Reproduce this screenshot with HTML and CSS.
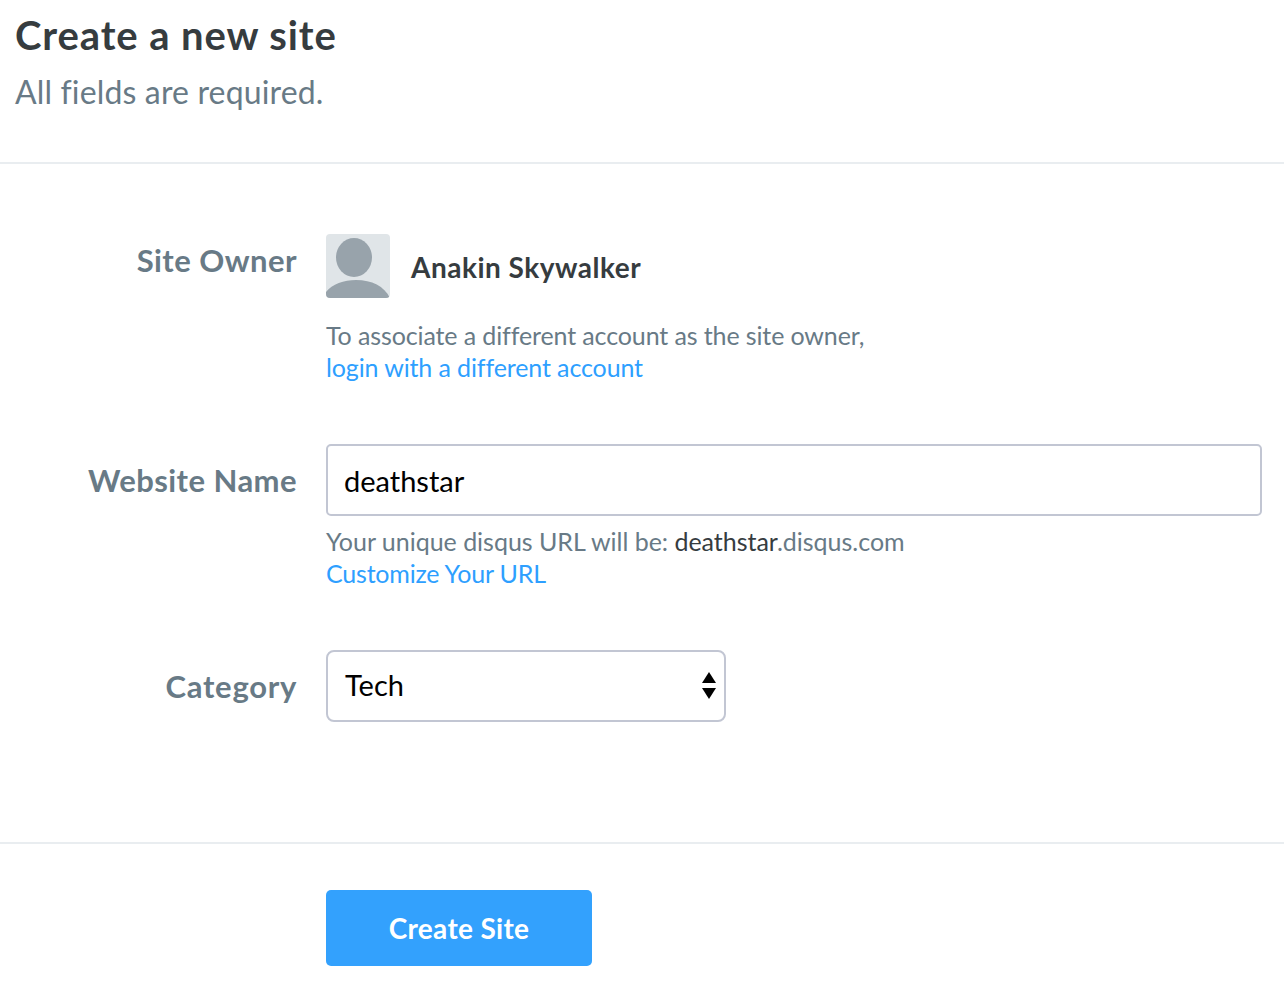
FILE: index.html
```html
<!DOCTYPE html>
<html>
  <head>
    <meta charset="utf-8" />
    <title>Create a new site</title>
    <link rel="stylesheet" href="styles.css">
  </head>
  <body>
    <header class="page-head">
      <h1>Create a new site</h1>
      <p>All fields are required.</p>
    </header>
    <form class="site-form">
      <div class="row row-owner">
        <div class="label">Site Owner</div>
        <div class="field">
          <div class="owner">
            <svg class="avatar" width="64" height="64" viewBox="0 0 64 64">
              <rect width="64" height="64" fill="#e0e5e8" />
              <ellipse cx="28" cy="23.5" rx="18" ry="19.5" fill="#98a3ab" />
              <path d="M0 58 C6 50 18 46 30 46 C46 46 58 52 64 64 L0 64 Z" fill="#98a3ab" />
            </svg>
            <span class="owner-name">Anakin Skywalker</span>
          </div>
          <p class="help">To associate a different account as the site owner,<br><a href="#">login with a different account</a></p>
        </div>
      </div>
      <div class="row row-name">
        <div class="label">Website Name</div>
        <div class="field">
          <input class="text-input" type="text" value="deathstar" />
          <p class="help">Your unique disqus URL will be: <span class="dark">deathstar</span>.disqus.com<br><a href="#">Customize Your URL</a></p>
        </div>
      </div>
      <div class="row row-cat">
        <div class="label">Category</div>
        <div class="field">
          <div class="select-box">
            <span class="select-value">Tech</span>
            <svg width="14" height="28" viewBox="0 0 14 28">
              <path d="M7 0 L14 11 L0 11 Z" fill="#000" />
              <path d="M0 16 L14 16 L7 27 Z" fill="#000" />
            </svg>
          </div>
        </div>
      </div>
      <div class="actions">
        <button class="btn" type="button">Create Site</button>
      </div>
    </form>
  </body>
</html>
```

FILE: styles.css
```css
* {
  margin: 0;
  padding: 0;
  box-sizing: border-box;
}
body {
  font-family: "Lato", "Noto Sans", sans-serif;
  font-variant-ligatures: none;
  color: #363c3f;
  background: #fff;
  overflow: hidden;
}
.page-head {
  height: 164px;
  padding: 9px 15px 0;
  border-bottom: 2px solid #e9edf0;
}
.page-head h1 {
  font-size: 40px;
  line-height: 52px;
  font-weight: 700;
  letter-spacing: 0.9px;
}
.page-head p {
  font-size: 32px;
  line-height: 44px;
  margin-top: 9px;
  letter-spacing: 0.15px;
  color: #687a86;
}
.site-form {
  padding-top: 70px;
}
.row {
  display: flex;
}
.row-name {
  margin-top: 61px;
}
.row-cat {
  margin-top: 61px;
  height: 194px;
  border-bottom: 2px solid #e9edf0;
}
.label {
  width: 297px;
  text-align: right;
  font-size: 31px;
  line-height: 52px;
  font-weight: 700;
  letter-spacing: 0.45px;
  color: #687a86;
}
.row-name .label,
.row-cat .label {
  padding-top: 10px;
}
.row-cat .label {
  letter-spacing: 0.7px;
}
.field {
  margin-left: 29px;
  width: 936px;
}
.owner {
  display: flex;
  align-items: center;
  height: 64px;
}
.owner-name {
  margin-left: 21px;
  font-size: 28px;
  font-weight: 700;
  letter-spacing: 0.5px;
  padding-top: 2px;
}
.avatar {
  border-radius: 4px;
}
.help {
  font-size: 25px;
  line-height: 32px;
  letter-spacing: -0.12px;
  color: #687a86;
}
.row-owner .help {
  margin-top: 21px;
}
.row-name .help {
  margin-top: 9px;
  letter-spacing: -0.02px;
}
.help a {
  color: #2e9fff;
  text-decoration: none;
}
.row-name .help a {
  letter-spacing: -0.2px;
}
.dark {
  color: #363c3f;
}
.text-input {
  display: block;
  width: 100%;
  height: 72px;
  padding: 1px 16px 0;
  border: 2px solid #c2c6d3;
  border-radius: 5px;
  font: 29px "Lato", sans-serif;
  color: #000;
}
.select-box {
  width: 400px;
  height: 72px;
  padding: 0 8px 0 17px;
  border: 2px solid #c2c6d3;
  border-radius: 8px;
  display: flex;
  align-items: center;
  justify-content: space-between;
  font-size: 29px;
  color: #000;
}
.select-value {
  padding-bottom: 3px;
}
.actions {
  padding: 46px 0 0 326px;
}
.btn {
  width: 266px;
  height: 76px;
  border: 0;
  border-radius: 5px;
  background: #33a1fd;
  color: #fff;
  font: 700 28px "Lato", sans-serif;
  letter-spacing: 0.3px;
}
```
